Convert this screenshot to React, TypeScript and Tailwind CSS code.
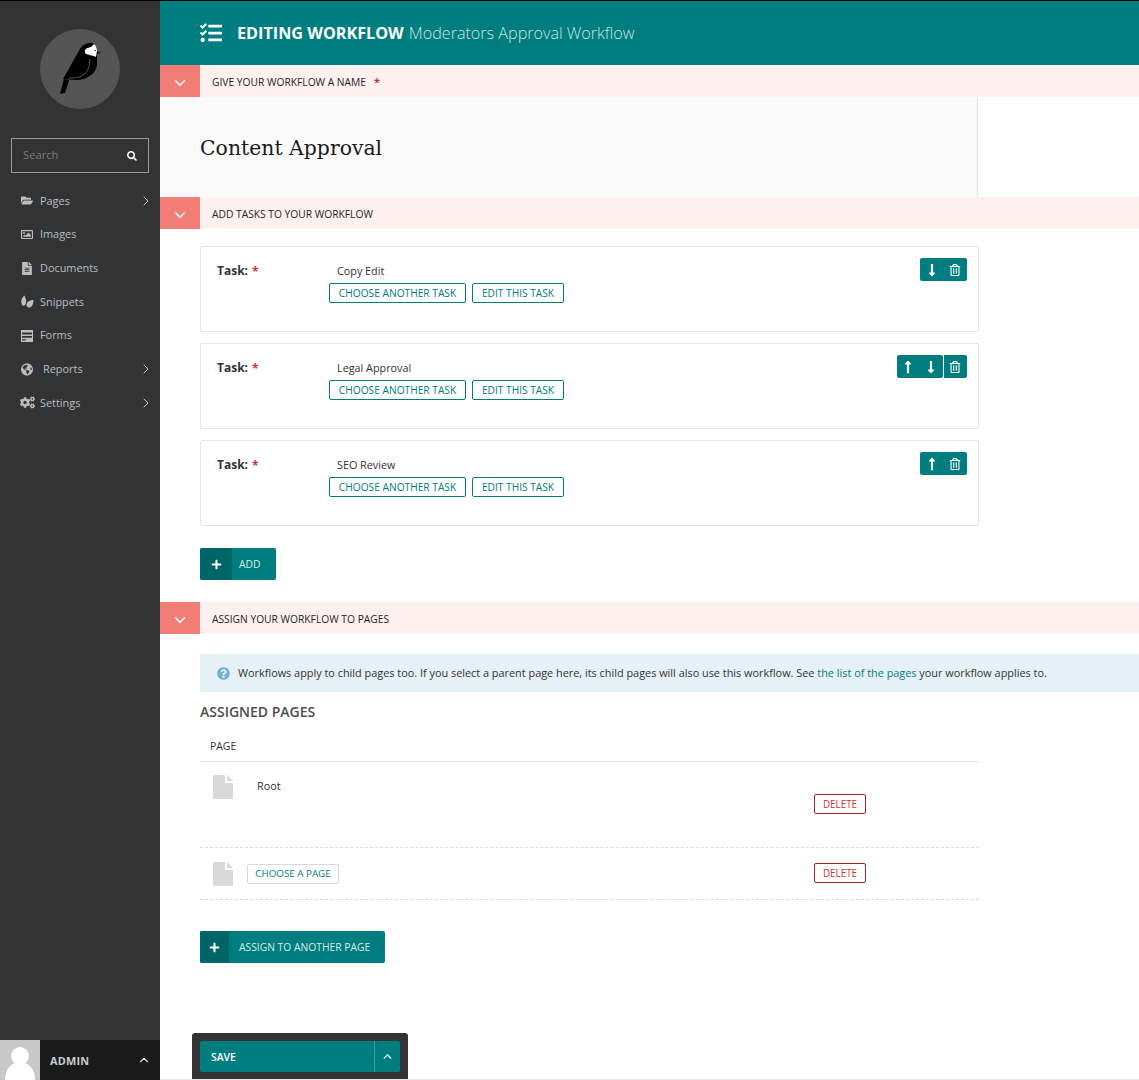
import React from "react";
import { FaFolderOpen, FaRegImage, FaFileAlt, FaCogs, FaSearch, FaTasks, FaRegTrashAlt, FaLongArrowAltUp, FaLongArrowAltDown, FaPlus, FaQuestionCircle, FaGlobeAmericas } from "react-icons/fa";
import { ChevronRight, ChevronDown, ChevronUp } from "lucide-react";

const Bird = () => (
  <svg viewBox="0 0 80 80" className="w-20 h-20">
    <circle cx="40" cy="40" r="40" fill="#555" />
    <path d="M20 65 L24 50 L29 51 L25 64 Z" fill="#000" />
    <path d="M23 50 L40 20 C43 15 47 14 52 14 C55 15 57 18 57 22 L57 36 C56 44 48 51 36 51 Z" fill="#000" />
    <path d="M45 24 C44 19 48 19 51 18 C52 17 53 16 54 15 C56 17 57 19 57 22 L56 28 C52 26 47 26 45 24 Z" fill="#fff" />
    <circle cx="55" cy="21.5" r="0.8" fill="#333" />
    <path d="M57 22 L61 24 L57 25 Z" fill="#111" />
    <path d="M29 49 C42 50 50 44 50 30" stroke="#888" strokeWidth="0.6" fill="none" />
  </svg>
);

const SnippetIcon = () => (
  <svg viewBox="0 0 14 14" className="w-[14px] h-[14px] shrink-0" fill="#bdbdbd">
    <path d="M4.5 0.5 C1 3 0.5 7 2.5 10.5 C4.5 11 6 10 6 7.5 C6.5 5 5.5 3 4.5 0.5 Z" />
    <path d="M13.5 5 C10 5 7 6.5 6.5 9.5 C6.5 11.5 8 13 10 12.5 C12.5 11.5 13.5 8 13.5 5 Z" />
  </svg>
);
const FormIcon = () => (
  <svg viewBox="0 0 12 12" className="w-3 h-3 shrink-0" fill="#bdbdbd">
    <path fillRule="evenodd" d="M0 0h12v12H0Z M1 2.5v2h10v-2Z M1 6v1.7h10V6Z M1 9.3v1.2h4V9.3Z" />
  </svg>
);
const PageIcon = () => (
  <svg viewBox="0 0 20 24" className="w-5 h-6 shrink-0" fill="#d9d9d9">
    <path d="M1 0H12V8H20V23Q20 24 19 24H1Q0 24 0 23V1Q0 0 1 0Z" />
    <path d="M14 0L20 6H14Z" />
  </svg>
);
const Avatar = () => (
  <svg viewBox="0 0 40 40" className="w-10 h-10">
    <rect width="40" height="40" fill="#c8c8c8" />
    <circle cx="20" cy="16" r="9" fill="#fff" />
    <path d="M5 40 C5 30 10 24 16 23 L24 23 C30 24 35 30 35 40 Z" fill="#fff" />
  </svg>
);

function Nav({ icon, label, arrow, gap = "gap-[7px]" }: { icon: React.ReactNode; label: string; arrow?: boolean; gap?: string }) {
  return (
    <div className={`flex items-center text-[10.9px] text-[#b9bec5] h-[33.7px] pl-[21px] pr-[6px] ${gap}`}>
      <span className="w-[12px] flex items-center justify-center text-[#bdbdbd] text-[13px] shrink-0">{icon}</span>
      <span className="flex-1">{label}</span>
      {arrow && <ChevronRight size={16} strokeWidth={1.5} className="text-[#c8c8c8]" />}
    </div>
  );
}

function SectionHead({ title, required }: { title: string; required?: boolean }) {
  return (
    <div className="h-8 bg-[#fdf1ef] flex items-center shrink-0">
      <div className="w-10 h-8 bg-[#f37e77] flex items-center justify-center pt-[3px]">
        <ChevronDown size={18} strokeWidth={2} className="text-white" />
      </div>
      <span className="ml-3 pt-[3px] text-[10.25px] text-[#262626]">{title}</span>
      {required && <span className="ml-[8px] pt-[3px] text-[11px] text-[#cd3238] font-bold">*</span>}
    </div>
  );
}

function OutlineBtn({ children, w }: { children: React.ReactNode; w: string }) {
  return (
    <span className={`${w} h-5 flex items-center justify-center pt-[1px] border border-[#007d7e] rounded-[2px] text-[10.2px] text-[#007d7e] bg-white`}>{children}</span>
  );
}

function TaskCard({ name, up, down, top = "mt-[11px]" }: { name: string; up?: boolean; down?: boolean; top?: string }) {
  return (
    <div className={`${top} w-[779px] h-[86px] border border-[#e6e6e6] rounded-[2px] relative bg-white`}>
      <div className="flex pt-[15px] pl-4">
        <div className="w-[112px] flex text-[12px] pt-[1px]">
          <span className="font-bold text-[#333] leading-[16px]">Task:</span>
          <span className="ml-[4px] text-[#cd3238] font-bold leading-[18px]">*</span>
        </div>
        <div className="flex flex-col">
          <span className="ml-2 text-[10.8px] text-[#333] leading-[18px]">{name}</span>
          <div className="flex gap-[6px] mt-[3px]">
            <OutlineBtn w="w-[137px]">CHOOSE ANOTHER TASK</OutlineBtn>
            <OutlineBtn w="w-[92px]">EDIT THIS TASK</OutlineBtn>
          </div>
        </div>
      </div>
      <div className="absolute right-[11px] top-[11px] flex text-white">
        {up && (
          <span className={`${down ? "w-[23px]" : "w-[24px]"} h-[23px] bg-[#007d7e] rounded-l-[2px] flex items-center justify-center pr-[1px]`}>
            <FaLongArrowAltUp size={14} />
          </span>
        )}
        {down && (
          <span className={`${up ? "w-[23px] mr-[1px] rounded-r-[2px]" : "w-[24px] rounded-l-[2px]"} h-[23px] bg-[#007d7e] flex items-center justify-center pr-[1px]`}>
            <FaLongArrowAltDown size={14} />
          </span>
        )}
        <span className="w-[23px] h-[23px] bg-[#007d7e] rounded-r-[2px] flex items-center justify-center pr-[1px]">
          <FaRegTrashAlt size={12} />
        </span>
      </div>
    </div>
  );
}

function PlusBtn({ label, iconW, w, top, ml }: { label: string; iconW: string; w: string; top: string; ml: string }) {
  return (
    <div className={`${top} ${w} h-8 bg-[#007d7e] rounded-[2px] flex items-center text-white`}>
      <span className={`${iconW} h-8 bg-[#006566] rounded-l-[2px] flex items-center justify-center shrink-0`}>
        <FaPlus size={11} />
      </span>
      <span className={`${ml} pt-[2px] text-[10.3px] text-[#d9eeee]`}>{label}</span>
    </div>
  );
}

function DeleteBtn() {
  return (
    <span className="w-[52px] h-5 border border-[#b11f26] rounded-[2px] flex items-center justify-center text-[9.9px] text-[#cd3238] bg-white">DELETE</span>
  );
}

export default function App() {
  return (
    <div className="relative w-[1139px] h-[1080px] overflow-hidden flex bg-white font-['Open_Sans',sans-serif] border-t border-black">
      <aside className="w-[160px] shrink-0 h-full bg-[#333] flex flex-col justify-between">
        <div>
          <div className="flex justify-center pt-[28px]">
            <Bird />
          </div>
          <div className="mx-[11px] mt-[29px] h-[35px] border border-[#9a9a9a] flex items-center justify-between pl-[11px] pr-[11px]">
            <span className="text-[11.2px] text-[#7d7d7d]">Search</span>
            <FaSearch size={10} className="text-white" />
          </div>
          <nav className="mt-[11px]">
            <Nav icon={<FaFolderOpen />} label="Pages" arrow />
            <Nav icon={<FaRegImage />} label="Images" />
            <Nav icon={<FaFileAlt />} label="Documents" />
            <Nav icon={<SnippetIcon />} label="Snippets" />
            <Nav icon={<FormIcon />} label="Forms" />
            <Nav icon={<FaGlobeAmericas />} label="Reports" arrow gap="gap-[10px]" />
            <Nav icon={<FaCogs size={15} className="shrink-0" />} label="Settings" arrow />
          </nav>
        </div>
        <div className="h-10 bg-[#1a1a1a] flex items-center">
          <Avatar />
          <span className="ml-[10px] pt-[2px] text-[10.9px] font-bold text-[#c5ccd3] flex-1 tracking-[0.2px]">ADMIN</span>
          <ChevronUp size={14} strokeWidth={2} className="text-[#ddd] mr-[9px]" />
        </div>
      </aside>

      <main className="flex-1 flex flex-col min-w-0">
        <header className="h-[64px] bg-[#007d7e] flex items-center pl-10 shrink-0 text-white">
          <FaTasks size={22} className="shrink-0" />
          <span className="ml-[15px] text-[16.2px] font-bold whitespace-nowrap">EDITING WORKFLOW</span>
          <span className="ml-[5px] text-[16.15px] font-light text-[#c9e6e6] whitespace-nowrap">Moderators Approval Workflow</span>
        </header>

        <SectionHead title="GIVE YOUR WORKFLOW A NAME" required />
        <div className="w-[818px] h-[100px] bg-[#fafafa] border-r border-[#e6e6e6] flex items-center pl-10 pt-[2px] shrink-0">
          <span className="font-['DejaVu_Serif',serif] text-[20.4px] text-[#1a1a1a]">Content Approval</span>
        </div>

        <SectionHead title="ADD TASKS TO YOUR WORKFLOW" />
        <div className="pl-10 pt-[17px]">
          <TaskCard top="" name="Copy Edit" down />
          <TaskCard name="Legal Approval" up down />
          <TaskCard name="SEO Review" up />
          <PlusBtn top="mt-[22px]" w="w-[76px]" iconW="w-8" ml="ml-[7px]" label="ADD" />
        </div>

        <div className="mt-[22px]">
          <SectionHead title="ASSIGN YOUR WORKFLOW TO PAGES" />
        </div>

        <div className="pl-10 pt-5">
          <div className="h-[38px] bg-[#e6f0f7] rounded-l-[2px] flex items-center pl-[17px] text-[10.88px] text-[#333] whitespace-nowrap">
            <FaQuestionCircle size={13} className="text-[#71b2d4] mr-2 shrink-0" />
            <span>
              Workflows apply to child pages too. If you select a parent page here, its child pages will also use this workflow. See{" "}
              <span className="text-[#007d7e]">the list of the pages</span> your workflow applies to.
            </span>
          </div>
          <h2 className="mt-[10px] text-[14px] leading-[19px] font-semibold text-[#4d4d4d]">ASSIGNED PAGES</h2>

          <div className="w-[779px] mt-[16px]">
            <div className="h-[25px] border-b border-[#e6e6e6] pl-[10px] text-[10.4px] text-[#333] pt-[2px]">PAGE</div>
            <div className="h-[86px] border-b border-dashed border-[#dcdcdc] relative flex pl-[13px] pt-[13px]">
              <PageIcon />
              <span className="ml-[24px] pt-[1px] text-[10.8px] text-[#333] leading-[20px]">Root</span>
              <div className="absolute left-[614px] top-[32px]">
                <DeleteBtn />
              </div>
            </div>
            <div className="h-[52px] border-b border-dashed border-[#dcdcdc] flex items-center pl-[13px] relative">
              <PageIcon />
              <span className="ml-[14px] w-[92px] h-5 pt-[1px] border border-[#d9d9d9] rounded-[2px] flex items-center justify-center text-[9.8px] text-[#007d7e]">CHOOSE A PAGE</span>
              <div className="absolute left-[614px] top-[15px]">
                <DeleteBtn />
              </div>
            </div>
          </div>

          <PlusBtn top="mt-[31px]" w="w-[185px]" iconW="w-[29px]" ml="ml-[10px]" label="ASSIGN TO ANOTHER PAGE" />
        </div>
      </main>

      <div className="absolute left-[192px] top-[1032px] w-[216px] h-[47px] bg-[#333] rounded-t-[3px] pl-2 pr-2 pt-2">
        <div className="h-[31px] bg-[#007d7e] rounded-[2px] flex text-white">
          <span className="w-[175px] pl-[11px] pt-[3px] text-[10.4px] font-semibold flex items-center border-r border-[#3d9c9d]">SAVE</span>
          <span className="flex-1 flex items-center justify-center">
            <ChevronUp size={13} strokeWidth={2.5} />
          </span>
        </div>
      </div>
      <div className="absolute left-[160px] right-0 bottom-0 h-[1px] bg-[#e6e6e6]" />
    </div>
  );
}
